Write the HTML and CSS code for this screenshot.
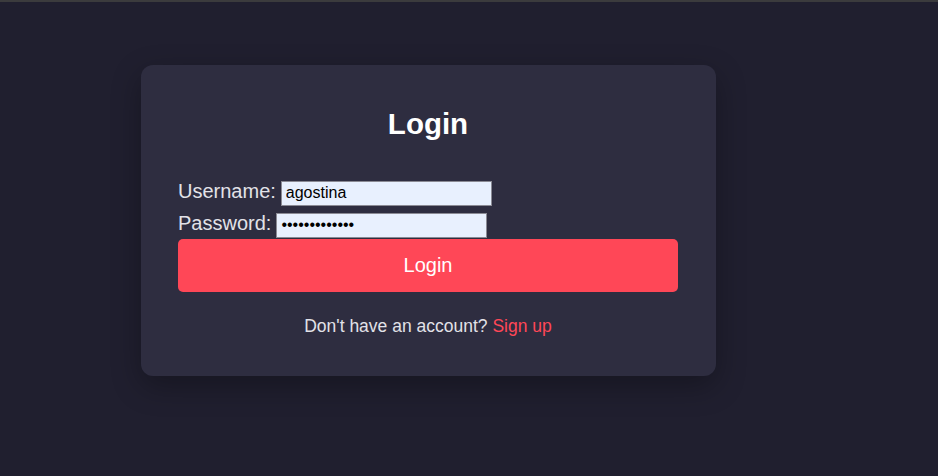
FILE: index.html
```html
<!DOCTYPE html>
<html>
<head>
<meta charset="utf-8">
<link rel="stylesheet" href="styles.css">
</head>
<body>
<div class="topbar"></div>
<main class="page">
  <div class="card">
    <h1 class="title">Login</h1>
    <form class="form">
      <div class="row"><label class="label">Username:</label><input class="input" type="text" value="agostina"></div>
      <div class="row"><label class="label">Password:</label><input class="input" type="password" value="agostina12345"></div>
      <button class="btn" type="button">Login</button>
    </form>
    <p class="foot">Don't have an account? <a class="link" href="#">Sign up</a></p>
  </div>
</main>
</body>
</html>
```
FILE: styles.css
```css
html, body {
  margin: 0;
  padding: 0;
  background: #201f2f;
  font-family: "Liberation Sans", Arial, sans-serif;
  height: 100%;
}
.topbar {
  height: 2px;
  background: #3b3b3d;
}
.page {
  padding: 63px 0 0 141px;
}
.card {
  width: 500px;
  padding: 42px 38px 40px 37px;
  background: #2e2d40;
  border-radius: 12px;
  box-shadow: 0 10px 30px rgba(0, 0, 0, 0.3);
}
.title {
  margin: 0;
  font-size: 29.5px;
  line-height: 34px;
  font-weight: bold;
  color: #ffffff;
  text-align: center;
}
.form {
  margin-top: 39px;
  display: flex;
  flex-direction: column;
}
.row {
  display: flex;
  align-items: baseline;
  gap: 5px;
  height: 25px;
  margin-bottom: 7px;
}
.row:nth-child(2) {
  margin-bottom: 2px;
}
.label {
  font-size: 20px;
  color: #e2e2e8;
}
.input {
  box-sizing: border-box;
  width: 211px;
  height: 25px;
  padding: 1px 4px;
  border: 1px solid #8a8a94;
  background: #e8f0fe;
  font-family: "Liberation Sans", Arial, sans-serif;
  font-size: 16px;
  color: #000;
  outline: none;
}
.btn {
  height: 53px;
  width: 100%;
  border: none;
  border-radius: 5px;
  background: #ff4757;
  color: #ffffff;
  font-family: "Liberation Sans", Arial, sans-serif;
  font-size: 20px;
}
.foot {
  margin: 24px 0 0;
  text-align: center;
  font-size: 17.5px;
  line-height: 20px;
  color: #e2e2e8;
}
.link {
  color: #ff4757;
  text-decoration: none;
}
```
